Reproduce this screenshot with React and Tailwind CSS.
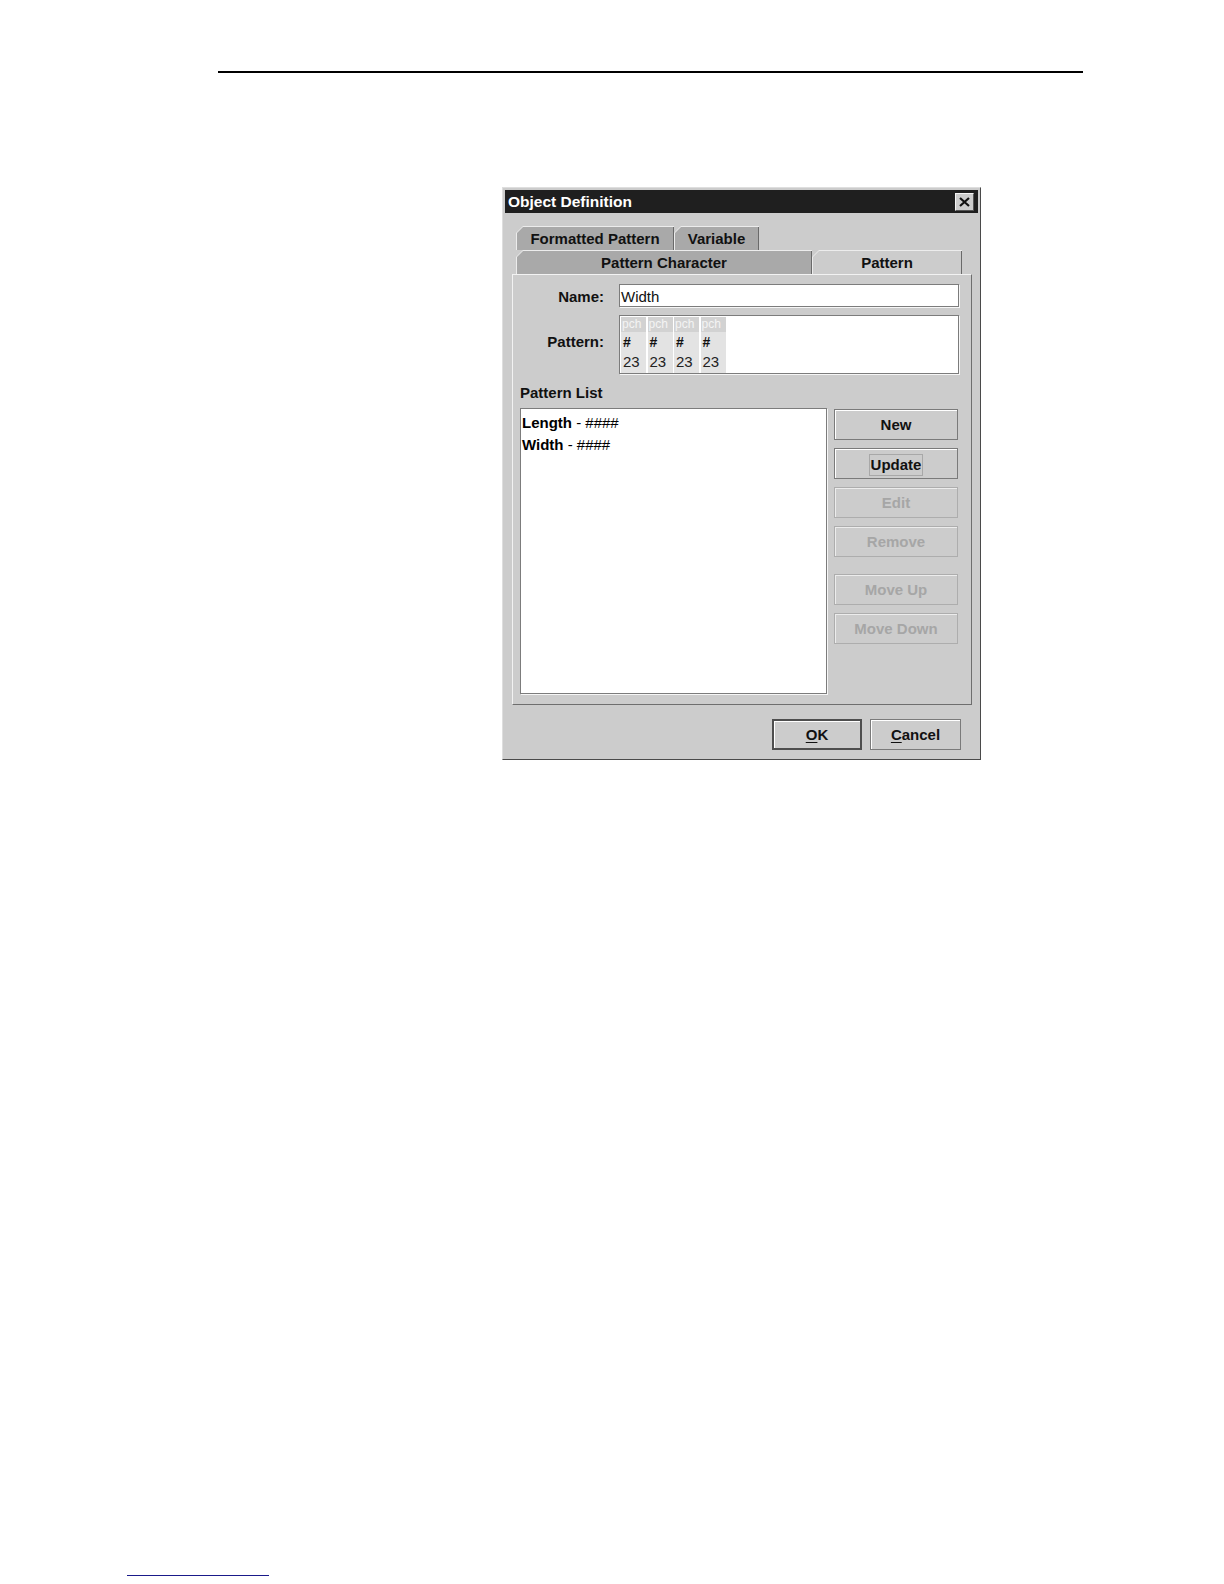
import React from "react";

function Btn({ children, disabled, className = "" }) {
  return (
    <div
      className={
        "flex items-center justify-center h-[31px] pt-[2px] text-[15px] font-bold border " +
        (disabled
          ? "border-[#adadad] text-[#a6a6a6] shadow-[inset_1px_1px_0_#ececec]"
          : "border-[#7a7a7a] text-[#111] shadow-[inset_1px_1px_0_#ffffff]") +
        " " +
        className
      }
    >
      {children}
    </div>
  );
}

function Tab({ children, selected, className = "" }) {
  return (
    <div
      className={
        "bg-[#ececec] [clip-path:polygon(7px_0,100%_0,100%_100%,0_100%,0_7px)] " +
        className
      }
    >
      <div
        className={
          "ml-[1px] mt-[1px] h-full flex items-center justify-center text-[15px] font-bold text-[#111] border-r border-[#6a6a6a] [clip-path:polygon(6px_0,100%_0,100%_100%,0_100%,0_6px)] " +
          (selected ? "bg-[#cccccc]" : "bg-[#a9a9a9]")
        }
      >
        {children}
      </div>
    </div>
  );
}

function PatternCell() {
  return (
    <div className="flex flex-col w-[25px] bg-[#e3e3e3]">
      <div className="h-[15px] bg-[#d2d2d2] text-[12px] leading-[15px] text-[#f4f4f4] pl-[1px]">
        pch
      </div>
      <div className="h-[20px] text-[14px] leading-[20px] font-bold text-[#111] pl-[2px]">
        #
      </div>
      <div className="h-[20px] text-[15px] leading-[20px] text-[#222] pl-[2px]">
        23
      </div>
    </div>
  );
}

export default function App() {
  return (
    <div className="w-[1224px] h-[1584px] bg-white flex flex-col font-['Liberation_Sans',Arial,sans-serif]">
      <div className="mt-[71px] ml-[218px] w-[865px] h-[2px] bg-black" />

      {/* Dialog */}
      <div className="mt-[114px] ml-[502px] w-[479px] h-[573px] bg-[#cccccc] border border-t-[#dedede] border-l-[#dedede] border-r-[#4a4a4a] border-b-[#4a4a4a] p-[2px] flex flex-col">
        {/* Title bar */}
        <div className="h-[23px] shrink-0 bg-[#1f1f1f] flex items-center justify-between pl-[3px] pr-[4px]">
          <span className="text-white text-[15.5px] font-bold leading-none">
            Object Definition
          </span>
          <div className="w-[19px] h-[18px] bg-[#cccccc] border border-t-[#f4f4f4] border-l-[#f4f4f4] border-r-[#555] border-b-[#555] flex items-center justify-center">
            <svg width="11" height="10" viewBox="0 0 11 10">
              <path d="M1 1 L10 9 M10 1 L1 9" stroke="#111" strokeWidth="2.2" />
            </svg>
          </div>
        </div>

        {/* Body */}
        <div className="flex-1 flex flex-col pl-[7px] pr-[6px] pt-[13px]">
          {/* Tabs */}
          <div className="ml-[4px] flex flex-col">
            <div className="flex h-[24px]">
              <Tab className="w-[158px]">Formatted Pattern</Tab>
              <Tab className="w-[85px]">Variable</Tab>
            </div>
            <div className="flex h-[24px]">
              <Tab className="w-[296px]">Pattern Character</Tab>
              <Tab selected className="w-[150px]">
                Pattern
              </Tab>
            </div>
          </div>

          {/* Panel */}
          <div className="h-[431px] shrink-0 border border-t-[#f2f2f2] border-l-[#f2f2f2] border-r-[#6e6e6e] border-b-[#6e6e6e] pt-[9px] pl-[7px] pr-[12px] flex flex-col">
            <div className="flex items-center h-[23px]">
              <div className="w-[84px] pt-[3px] text-right text-[15px] font-bold text-[#111]">
                Name:
              </div>
              <div className="ml-[15px] flex-1 h-[23px] bg-white border border-[#7c7c7c] shadow-[1px_1px_0_#f6f6f6] flex items-center pl-[1px] pt-[3px] text-[15px] text-[#111]">
                Width
              </div>
            </div>
            <div className="flex items-center mt-[8px] h-[59px]">
              <div className="w-[84px] mb-[5px] text-right text-[15px] font-bold text-[#111]">
                Pattern:
              </div>
              <div className="ml-[15px] flex-1 h-[59px] bg-white border border-[#7c7c7c] shadow-[1px_1px_0_#f6f6f6] pt-[1px] pl-[1px] flex gap-[1.5px]">
                <PatternCell />
                <PatternCell />
                <PatternCell />
                <PatternCell />
              </div>
            </div>

            <div className="mt-[10px] h-[18px] text-[15px] font-bold text-[#111] leading-[18px]">
              Pattern List
            </div>

            <div className="mt-[6px] flex gap-[7px]">
              <div className="w-[307px] h-[286px] bg-white border border-[#7c7c7c] shadow-[1px_1px_0_#f6f6f6] pl-[1px] pt-[3px] flex flex-col text-[15px] text-[#000]">
                <div className="h-[22px] leading-[22px]">
                  <span className="font-bold">Length</span> - ####
                </div>
                <div className="h-[22px] leading-[22px]">
                  <span className="font-bold">Width</span> - ####
                </div>
              </div>
              <div className="w-[124px] pt-[1px] flex flex-col gap-[8px]">
                <Btn>New</Btn>
                <Btn>
                  <span className="border border-[#a8a8a8] px-[1px] leading-[20px]">
                    Update
                  </span>
                </Btn>
                <Btn disabled>Edit</Btn>
                <Btn disabled>Remove</Btn>
                <Btn disabled className="mt-[9px]">
                  Move Up
                </Btn>
                <Btn disabled>Move Down</Btn>
              </div>
            </div>
          </div>

          {/* Bottom buttons */}
          <div className="mt-[14px] flex justify-end gap-[8px] pr-[11px]">
            <div className="w-[90px] h-[31px] pt-[2px] flex items-center justify-center border-2 border-[#4e4e4e] shadow-[inset_1px_1px_0_#ffffff] text-[15px] font-bold text-[#111]">
              <span>
                <span className="underline underline-offset-2">O</span>K
              </span>
            </div>
            <div className="w-[91px] h-[31px] pt-[2px] flex items-center justify-center border border-[#7a7a7a] shadow-[inset_1px_1px_0_#ffffff] text-[15px] font-bold text-[#111]">
              <span>
                <span className="underline underline-offset-2">C</span>ancel
              </span>
            </div>
          </div>
        </div>
      </div>

      <div className="mt-auto mb-[8px] ml-[127px] w-[142px] h-[1px] bg-[#1a1a8a]" />
    </div>
  );
}
